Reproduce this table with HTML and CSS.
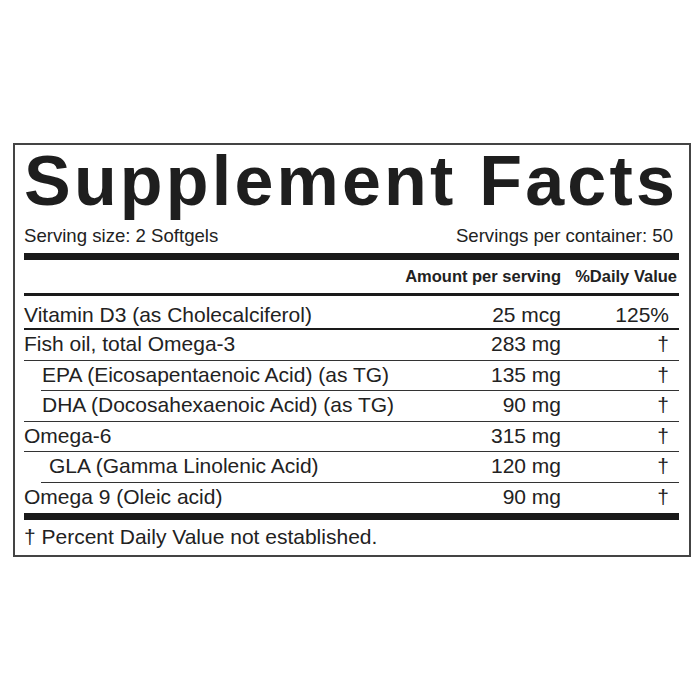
FILE: index.html
```html
<!DOCTYPE html>
<html lang="en">
<head>
    <meta charset="UTF-8">
    <meta name="viewport" content="width=device-width, initial-scale=1.0">
    <title>Supplement Facts</title>
    <link rel="stylesheet" href="styles.css">
</head>
<body>
    <div class="label">
        <h1 class="title">Supplement Facts</h1>

        <div class="serving">
            <span>Serving size: 2 Softgels</span>
            <span>Servings per container: 50</span>
        </div>

        <div class="row head">
            <span class="name"></span>
            <span class="amt">Amount per serving</span>
            <span class="dv">%Daily Value</span>
        </div>

        <div class="row first">
            <span class="name">Vitamin D3 (as Cholecalciferol)</span>
            <span class="amt">25 mcg</span>
            <span class="dv">125%</span>
        </div>
        <div class="row">
            <span class="name">Fish oil, total Omega-3</span>
            <span class="amt">283 mg</span>
            <span class="dv">†</span>
        </div>
        <div class="row sub">
            <span class="name">EPA (Eicosapentaenoic Acid) (as TG)</span>
            <span class="amt">135 mg</span>
            <span class="dv">†</span>
        </div>
        <div class="row sub-full">
            <span class="name">DHA (Docosahexaenoic Acid) (as TG)</span>
            <span class="amt">90 mg</span>
            <span class="dv">†</span>
        </div>
        <div class="row">
            <span class="name">Omega-6</span>
            <span class="amt">315 mg</span>
            <span class="dv">†</span>
        </div>
        <div class="row sub sub-deep">
            <span class="name">GLA (Gamma Linolenic Acid)</span>
            <span class="amt">120 mg</span>
            <span class="dv">†</span>
        </div>
        <div class="row last">
            <span class="name">Omega 9 (Oleic acid)</span>
            <span class="amt">90 mg</span>
            <span class="dv">†</span>
        </div>

        <div class="bar"></div>

        <p class="note">† Percent Daily Value not established.</p>
    </div>
</body>
</html>
```

FILE: styles.css
```css
body {
    margin: 0;
    background: white;
    font-family: "Liberation Sans", Arial, sans-serif;
    color: #222;
}

.label {
    box-sizing: border-box;
    width: 678px;
    margin: 143px 0 0 13px;
    border: 2px solid #444;
    padding: 0 10px 0 9px;
}

.title {
    margin: 1px 0 0;
    font-size: 70px;
    line-height: 70px;
    font-weight: bold;
    letter-spacing: 3.2px;
    color: #1e1e1e;
    white-space: nowrap;
}

.serving {
    display: flex;
    justify-content: space-between;
    margin-top: 7.6px;
    padding-right: 6px;
    font-size: 18.6px;
    line-height: 24px;
}

.serving + .row {
    border-top: 7px solid #1a1a1a;
    margin-top: 5.4px;
}

.row {
    display: flex;
    padding: 2px 0 3.6px;
    font-size: 21px;
    line-height: 24px;
    border-bottom: 1px solid #333;
}

.row .name {
    flex: 1;
    white-space: nowrap;
}

.row .amt {
    text-align: right;
}

.row .dv {
    width: 118px;
    padding-right: 10px;
    box-sizing: border-box;
    text-align: right;
}

.row.head {
    padding: 6px 0 7px;
    font-size: 16.5px;
    line-height: 20px;
    font-weight: bold;
    border-bottom: 3px solid #1a1a1a;
}

.row.head .dv {
    padding-right: 2px;
}

.row.first {
    padding: 6.7px 0 1.3px;
    border-bottom: 2.5px solid #1a1a1a;
}

.row.sub {
    margin-left: 17px;
}

.row.sub .name {
    padding-left: 1px;
}

.row.sub-deep .name {
    padding-left: 8px;
}

.row.sub-full .name {
    padding-left: 18px;
}

.row.last {
    border-bottom: none;
}

.bar {
    height: 7px;
    background: #1a1a1a;
}

.note {
    margin: 0;
    padding: 5.6px 0 6px;
    font-size: 21px;
    line-height: 24px;
}
```
